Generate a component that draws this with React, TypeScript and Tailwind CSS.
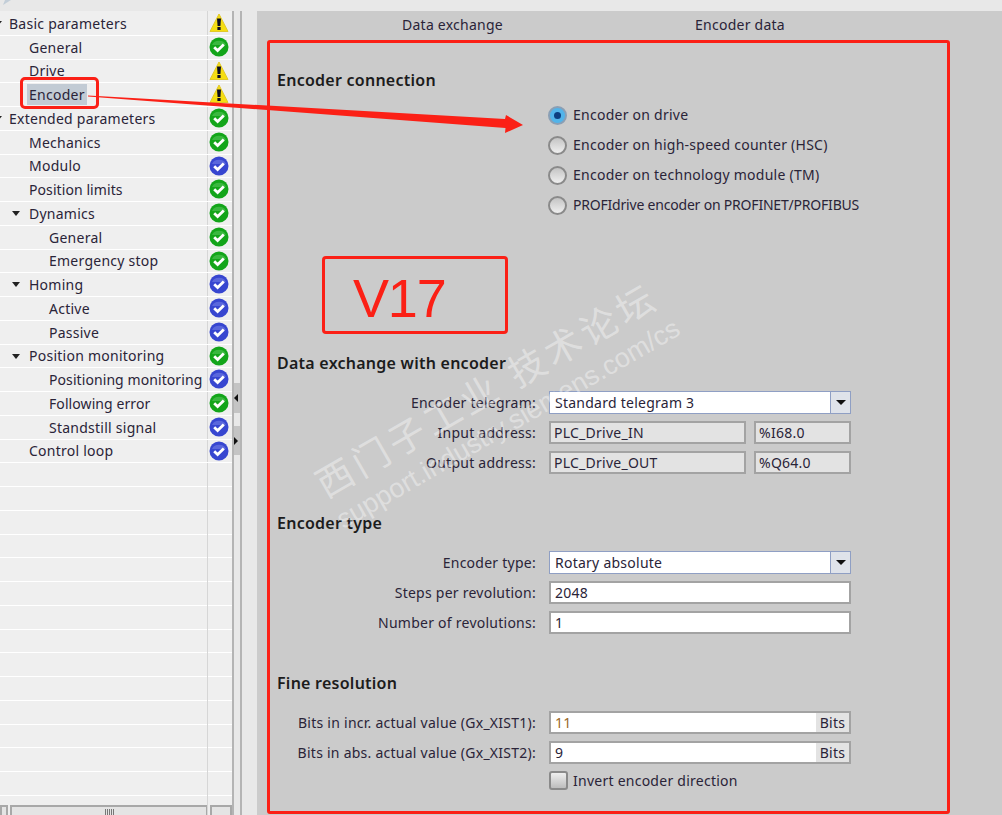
import { ReactNode } from 'react';

type Status = 'warn' | 'ok' | 'info';

const TREE: { label: string; depth: number; status: Status; open?: boolean; selected?: boolean; tight?: boolean }[] = [
  { label: 'Basic parameters', depth: 0, status: 'warn', open: true },
  { label: 'General', depth: 1, status: 'ok' },
  { label: 'Drive', depth: 1, status: 'warn' },
  { label: 'Encoder', depth: 1, status: 'warn', selected: true },
  { label: 'Extended parameters', depth: 0, status: 'ok', open: true },
  { label: 'Mechanics', depth: 1, status: 'ok' },
  { label: 'Modulo', depth: 1, status: 'info' },
  { label: 'Position limits', depth: 1, status: 'ok', tight: true },
  { label: 'Dynamics', depth: 1, status: 'ok', open: true },
  { label: 'General', depth: 2, status: 'ok' },
  { label: 'Emergency stop', depth: 2, status: 'ok' },
  { label: 'Homing', depth: 1, status: 'info', open: true },
  { label: 'Active', depth: 2, status: 'info' },
  { label: 'Passive', depth: 2, status: 'info' },
  { label: 'Position monitoring', depth: 1, status: 'ok', open: true },
  { label: 'Positioning monitoring', depth: 2, status: 'info', tight: true },
  { label: 'Following error', depth: 2, status: 'ok', tight: true },
  { label: 'Standstill signal', depth: 2, status: 'info' },
  { label: 'Control loop', depth: 1, status: 'info' },
];

function StatusIcon({ status }: { status: Status }) {
  if (status === 'warn') {
    return (
      <svg width="20" height="20" viewBox="0 0 20 20">
        <path d="M10 1 L19 18.5 H1 Z" fill="#f6de12" stroke="#e2c928" strokeWidth="1" strokeLinejoin="round" />
        <path d="M8 5.5 H12 L11.4 13 H8.6 Z" fill="#0c0c20" />
        <rect x="8.4" y="14" width="3.2" height="3" fill="#0c0c20" />
      </svg>
    );
  }
  const fill = status === 'ok' ? '#13a51a' : '#3746d0';
  const top = status === 'ok' ? '#6bd06c' : '#8490ea';
  return (
    <svg width="20" height="20" viewBox="0 0 20 20">
      <circle cx="10" cy="10" r="9.5" fill={fill} />
      <path d="M3 8 A7.5 6.5 0 0 1 17 8 Z" fill={top} opacity="0.45" />
      <path d="M5.2 10.3 L8.6 13.6 L14.8 7.4" fill="none" stroke="#fff" strokeWidth="2.8" />
    </svg>
  );
}

function TreeRow({ label, depth, status, open, selected, tight }: (typeof TREE)[number]) {
  const left = depth === 0 ? 'pl-[9px]' : depth === 1 ? 'pl-[29px]' : 'pl-[49px]';
  return (
    <div className={`relative flex h-[23.75px] items-center border-b border-white ${left}`}>
      {open && (
        <span
          className={`absolute top-[9px] h-0 w-0 border-x-[4px] border-t-[5px] border-x-transparent border-t-[#222] ${
            depth === 0 ? 'left-[-6px]' : 'left-[12px]'
          }`}
        />
      )}
      <span
        className={
          selected ? 'mx-[-2px] bg-[#c2cbd4] px-[2px] leading-[21px]' : tight ? 'tracking-[0.08px]' : ''
        }
      >
        {label}
      </span>
      <span className="absolute left-[209px] top-[1px]">
        <StatusIcon status={status} />
      </span>
    </div>
  );
}

function Field({ children, className = '' }: { children?: ReactNode; className?: string }) {
  return <div className={`flex h-[23px] items-center border-2 border-[#a3a3a3] ${className}`}>{children}</div>;
}

function FormRow({ label, children }: { label: string; children: ReactNode }) {
  return (
    <div className="flex h-[30px] items-center">
      <span className="w-[260px] pr-[1px] text-right">{label}:</span>
      <div className="ml-[12px] flex w-[302px] gap-[8px]">{children}</div>
    </div>
  );
}

function Select({ value }: { value: string }) {
  return (
    <div className="flex h-[23px] w-full items-center border border-[#8f9fc4] bg-white pl-[5px]">
      <span className="flex-1">{value}</span>
      <span className="flex h-full w-[20px] items-center justify-center border-l border-[#8f9fc4] bg-[#dfe3ea]">
        <span className="h-0 w-0 border-x-[5px] border-t-[5px] border-x-transparent border-t-[#111]" />
      </span>
    </div>
  );
}

function Radio({ label, checked, tight }: { label: string; checked?: boolean; tight?: boolean }) {
  return (
    <div className="flex h-[30px] items-center gap-[6px]">
      {checked ? (
        <span className="flex h-[19px] w-[19px] items-center justify-center rounded-full border-2 border-[#8a9fb5] bg-[#52b4ea]">
          <span className="h-[7px] w-[7px] rounded-full bg-[#0d3e80]" />
        </span>
      ) : (
        <span className="h-[19px] w-[19px] rounded-full border-2 border-[#8a8a8a] bg-gradient-to-b from-[#c4c4c4] to-[#efefef]" />
      )}
      <span className={`pb-[2px] ${tight ? 'tracking-[-0.2px]' : ''}`}>{label}</span>
    </div>
  );
}

function Heading({ children, className }: { children: ReactNode; className: string }) {
  return <h2 className={`h-[24px] text-[16px] font-semibold leading-[24px] text-[#1c1c1c] ${className}`}>{children}</h2>;
}

export default function App() {
  return (
    <div
      className="relative flex h-[815px] w-[1002px] flex-col overflow-hidden bg-[#e8e8e8] text-[14px] tracking-[0.25px] text-[#2a2438]"
      style={{ fontFamily: '"Noto Sans", "Noto Sans CJK SC", sans-serif' }}
    >
      <div className="relative h-[11px] shrink-0 bg-[#e8e8e8]">
        <svg className="absolute left-[3px] top-0" width="9" height="5" viewBox="0 0 9 5">
          <path d="M0 5 L2 0 H8 Z" fill="#c3ced8" />
        </svg>
      </div>
      <div className="flex min-h-0 flex-1">
        {/* Tree */}
        <div className="relative flex w-[232px] shrink-0 flex-col bg-[#efefef]">
          <div className="absolute bottom-0 left-[207px] top-0 w-px bg-[#d6d6d6]" />
          <div className="flex-1 overflow-hidden pt-[1px]">
            {TREE.map((row, i) => (
              <TreeRow key={i} {...row} />
            ))}
            {Array.from({ length: 14 }).map((_, i) => (
              <div key={i} className="h-[23.75px] border-b border-white" />
            ))}
          </div>
          <div className="flex h-[10px] shrink-0 gap-[2px]">
            <div className="w-[8px] border-2 border-b-0 border-[#a8a8a8] bg-[#e4e4e4]" />
            <div className="flex flex-1 justify-center border-2 border-b-0 border-[#a8a8a8] bg-[#e4e4e4] pt-[2px] text-[0px]">
              <span className="h-[6px] w-[9px] bg-[repeating-linear-gradient(90deg,#777_0,#777_1px,transparent_1px,transparent_2px)]" />
            </div>
            <div className="w-[22px] border-2 border-b-0 border-[#a8a8a8] bg-[#e4e4e4]" />
          </div>
        </div>

        {/* Splitter */}
        <div className="flex w-[10px] shrink-0 flex-col border-x-2 border-[#b4b4b4] bg-[#e8e8e8]">
          <div className="mt-[372px] flex h-[30px] items-center bg-[#c4c4c4]">
            <span className="h-0 w-0 border-y-[4px] border-r-[4px] border-y-transparent border-r-[#111]" />
          </div>
          <div className="mt-[13px] flex h-[29px] items-center bg-[#c4c4c4]">
            <span className="h-0 w-0 border-y-[4px] border-l-[4px] border-y-transparent border-l-[#111]" />
          </div>
        </div>
        <div className="w-[15px] shrink-0 bg-[#e8e8e8]" />

        {/* Main panel */}
        <div className="flex min-w-0 flex-1 flex-col bg-[#cbcbcb] pl-[10px] pr-[52px]">
          <div className="flex h-[29px] shrink-0 items-center pb-[2px]">
            <span className="ml-[135px]">Data exchange</span>
            <span className="ml-[192px]">Encoder data</span>
          </div>
          <div className="h-[774px] shrink-0 rounded-[3px] border-[3px] border-[#fb2016] pl-[7px]">
            <Heading className="mt-[25px]">Encoder connection</Heading>
            <div className="mt-[8px] pl-[271px]">
              <Radio label="Encoder on drive" checked />
              <Radio label="Encoder on high-speed counter (HSC)" />
              <Radio label="Encoder on technology module (TM)" />
              <Radio label="PROFIdrive encoder on PROFINET/PROFIBUS" tight />
            </div>

            <Heading className="mt-[131px]">Data exchange with encoder</Heading>
            <div className="mt-[12px]">
              <FormRow label="Encoder telegram">
                <Select value="Standard telegram 3" />
              </FormRow>
              <FormRow label="Input address">
                <Field className="w-[197px] bg-[#e3e3e3] px-[3px]">PLC_Drive_IN</Field>
                <Field className="flex-1 bg-[#e3e3e3] px-[3px]">%I68.0</Field>
              </FormRow>
              <FormRow label="Output address">
                <Field className="w-[197px] bg-[#e3e3e3] px-[3px]">PLC_Drive_OUT</Field>
                <Field className="flex-1 bg-[#e3e3e3] px-[3px]">%Q64.0</Field>
              </FormRow>
            </div>

            <Heading className="mt-[34px]">Encoder type</Heading>
            <div className="mt-[12px]">
              <FormRow label="Encoder type">
                <Select value="Rotary absolute" />
              </FormRow>
              <FormRow label="Steps per revolution">
                <Field className="w-full bg-white px-[4px]">2048</Field>
              </FormRow>
              <FormRow label="Number of revolutions">
                <Field className="w-full bg-white px-[4px]">1</Field>
              </FormRow>
            </div>

            <Heading className="mt-[34px]">Fine resolution</Heading>
            <div className="mt-[12px]">
              <FormRow label="Bits in incr. actual value (Gx_XIST1)">
                <Field className="w-full bg-white pl-[4px]">
                  <span className="flex-1 text-[#9a6a2a]">11</span>
                  <span className="flex h-full w-[33px] items-center justify-center bg-[#e3e3e3]">Bits</span>
                </Field>
              </FormRow>
              <FormRow label="Bits in abs. actual value (Gx_XIST2)">
                <Field className="w-full bg-white pl-[4px]">
                  <span className="flex-1">9</span>
                  <span className="flex h-full w-[33px] items-center justify-center bg-[#e3e3e3]">Bits</span>
                </Field>
              </FormRow>
              <div className="flex h-[27px] items-center gap-[5px] pl-[272px]">
                <span className="h-[19px] w-[19px] rounded-[3px] border-2 border-[#8a8a8a] bg-gradient-to-b from-[#efefef] to-[#bdbdbd]" />
                <span>Invert encoder direction</span>
              </div>
            </div>
          </div>
        </div>
      </div>

      {/* Forum watermark */}
      <div className="pointer-events-none absolute left-[300px] top-[362px] flex w-[410px] origin-center rotate-[-30deg] flex-col text-white/40">
        <span className="whitespace-nowrap text-[37px] leading-[40px] tracking-[4.5px]">西门子工业 技术论坛</span>
        <span className="mt-[5px] whitespace-nowrap text-[27px] leading-[30px] tracking-normal" style={{ fontFamily: '"Liberation Sans", sans-serif' }}>
          support.industry.siemens.com/cs
        </span>
      </div>

      {/* Annotations */}
      <div className="absolute left-[20px] top-[77px] h-[32px] w-[79px] rounded-[5px] border-[3px] border-[#fb2016]" />
      <div className="absolute left-[322px] top-[256px] flex h-[78px] w-[186px] items-center rounded-[4px] border-[3px] border-[#fb2016] pl-[28px] pt-[6px]">
        <span className="text-[54px] leading-none tracking-[-1.2px] text-[#fb2016]" style={{ fontFamily: '"Liberation Sans", sans-serif' }}>
          V17
        </span>
      </div>
      <svg className="pointer-events-none absolute left-0 top-0" width="1002" height="815" viewBox="0 0 1002 815">
        <path d="M88 95.5 L505 119 L506 115 L523 125 L505 133 L505.5 128 L88 96.5 Z" fill="#fb2016" />
      </svg>
    </div>
  );
}
